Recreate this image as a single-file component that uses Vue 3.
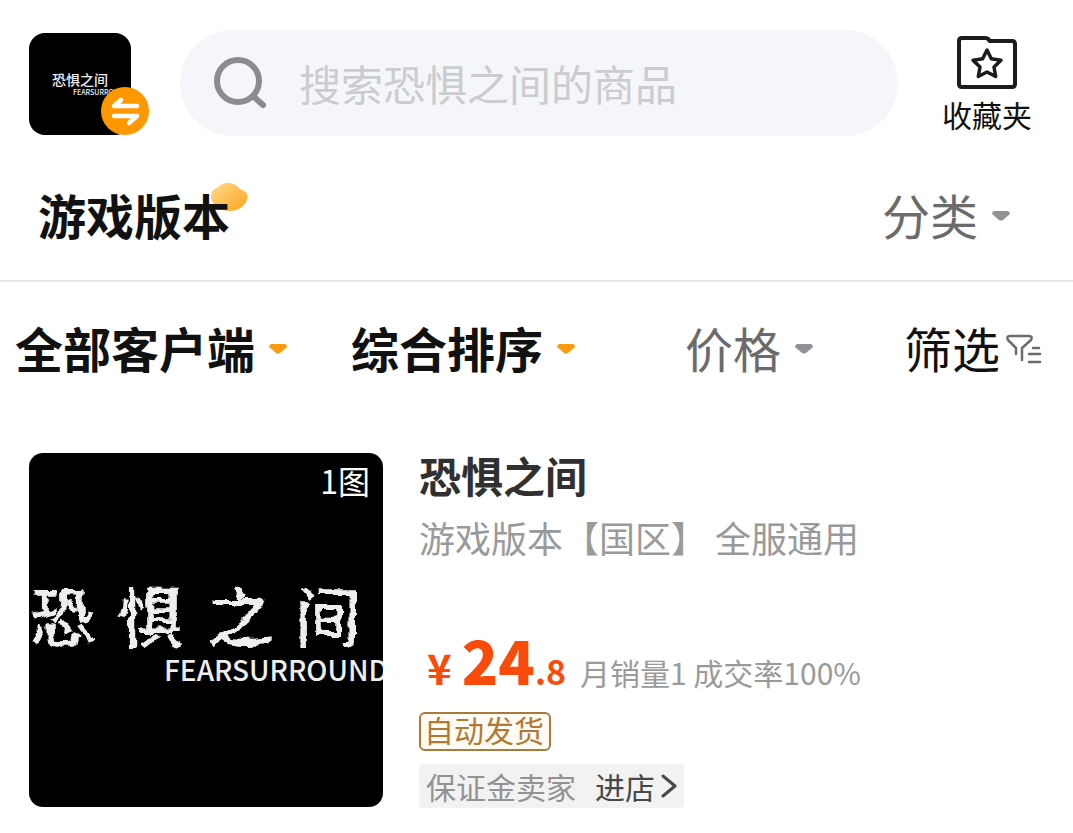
<script setup>
import { ref } from 'vue'

const keyword = ref('')
const filters = [
  { label: '全部客户端', tone: 'active', icon: 'arrow' },
  { label: '综合排序', tone: 'active', icon: 'arrow' },
  { label: '价格', tone: 'muted', icon: 'arrow' },
  { label: '筛选', tone: 'dark', icon: 'funnel' },
]
const brand = ['恐', '惧', '之', '间']
</script>

<template>
  <main class="page">
    <svg class="defs" width="0" height="0" aria-hidden="true">
      <filter id="brush" x="-5%" y="-10%" width="110%" height="120%">
        <feTurbulence type="fractalNoise" baseFrequency="0.07" numOctaves="3" seed="4" />
        <feDisplacementMap in="SourceGraphic" scale="9" xChannelSelector="R" yChannelSelector="G" />
      </filter>
    </svg>
    <header class="top">
      <button class="game" type="button" aria-label="切换游戏">
        <span class="game-cover">
          <span class="mini-cn">恐惧之间</span>
          <span class="mini-en">FEARSURROUND</span>
        </span>
        <span class="swap">
          <svg viewBox="0 0 48 48" fill="none" stroke="#fff" stroke-width="4.500" stroke-linecap="round" stroke-linejoin="round">
            <path d="M36 19H13L20 13M13 29H36L28 36" />
          </svg>
        </span>
      </button>
      <label class="search">
        <svg viewBox="0 0 54 54" fill="none" stroke="#8b8c90">
          <circle cx="25" cy="25" r="21" stroke-width="6" />
          <path d="M41 41L50 49" stroke-width="6" stroke-linecap="round" />
        </svg>
        <input v-model="keyword" type="text" placeholder="搜索恐惧之间的商品" aria-label="搜索商品" />
      </label>
      <a class="favorites" href="#">
        <svg viewBox="0 0 60 54" fill="none" stroke="#1c1c1c" stroke-width="4" stroke-linejoin="round">
          <path d="M5 2H28Q31 2 32 4L33 5H55Q58 5 58 8V48Q58 51 55 51H5Q2 51 2 48V5Q2 2 5 2Z" />
          <path d="M30 14L34.300 22.800L44 24.200L37 31L38.700 40.500L30 36L21.300 40.500L23 31L16 24.200L25.700 22.800Z" stroke-width="3.500" />
        </svg>
        <span>收藏夹</span>
      </a>
    </header>

    <nav class="section">
      <a class="section-title" href="#">
        <svg class="blob" viewBox="0 0 38 30">
          <defs>
            <linearGradient id="blobFill" x1="0" y1="0" x2="1" y2="1">
              <stop offset="0" stop-color="#ffdc8c" />
              <stop offset="1" stop-color="#fca21c" />
            </linearGradient>
          </defs>
          <path d="M1 17Q0 8 8 5Q17-3 27 4Q30 8 34 9Q40 13 36 20Q31 29 19 29Q5 28 1 17Z" fill="url(#blobFill)" />
        </svg>
        <span>游戏版本</span>
      </a>
      <button class="pick muted" type="button">
        分类
        <svg class="arrow" viewBox="0 0 18 10"><path d="M2 0H16Q18 1 18 3L11 9Q9 10 7 9L0 3Q0 1 2 0Z" fill="currentColor" /></svg>
      </button>
    </nav>

    <div class="filters">
      <button v-for="f in filters" :key="f.label" type="button" class="pick" :class="[f.tone, 'with-' + f.icon]">
        {{ f.label }}
        <svg v-if="f.icon === 'arrow'" class="arrow" viewBox="0 0 18 10"><path d="M2 0H16Q18 1 18 3L11 9Q9 10 7 9L0 3Q0 1 2 0Z" fill="currentColor" /></svg>
        <svg v-else class="funnel-icon" viewBox="0 0 36 30" fill="none" stroke="#6c6c6c" stroke-width="2.500" stroke-linecap="round" stroke-linejoin="round">
          <path d="M10 20V14L2 6Q0 2 4 2H23Q27 2 25 6L16 14V26M27 14H33M23 20H34M23 28H34" />
        </svg>
      </button>
    </div>

    <article class="card">
      <div class="cover">
        <div class="cover-cn"><span v-for="c in brand" :key="c">{{ c }}</span></div>
        <div class="cover-en">FEARSURROUND</div>
        <span class="count">1图</span>
      </div>
      <div class="info">
        <h2>恐惧之间</h2>
        <p class="desc">游戏版本【国区】 全服通用</p>
        <div class="price-row">
          <span class="yen">¥</span><strong>24</strong><span class="cents">.8</span>
          <span class="stats">月销量1 成交率100%</span>
        </div>
        <span class="tag">自动发货</span>
        <div class="shop">
          <span>保证金卖家</span>
          <a href="#">进店
            <svg viewBox="0 0 16 24" fill="none" stroke="#484848" stroke-width="3" stroke-linecap="round" stroke-linejoin="round"><path d="M2 2L14 12L2 22" /></svg>
          </a>
        </div>
      </div>
    </article>
  </main>
</template>

<style>
body {
  background: #fff;
}
</style>

<style scoped>
.page {
  font-family: "Noto Sans CJK SC", sans-serif;
  color: #111;
  overflow: hidden;
}
button {
  border: 0;
  padding: 0;
  background: none;
  font-family: inherit;
  color: #111;
}
a {
  color: inherit;
  text-decoration: none;
}
svg {
  display: block;
  flex: none;
}
.defs {
  position: absolute;
}
.top {
  display: flex;
  align-items: center;
  padding: 30px 41px 0 29px;
}
.game {
  position: relative;
  width: 102px;
  height: 102px;
  margin: 2px 49px 0 0;
  flex: none;
}
.game-cover {
  display: flex;
  flex-direction: column;
  justify-content: center;
  height: 100%;
  border-radius: 16px;
  background: #000;
  color: #eee;
  overflow: hidden;
  white-space: nowrap;
}
.mini-cn {
  font-size: 14px;
  line-height: 16px;
  font-weight: 500;
}
.mini-en {
  padding-left: 44px;
  font-size: 7px;
  line-height: 10px;
  font-weight: 500;
  text-align: left;
}
.swap {
  position: absolute;
  right: -18px;
  bottom: 0;
  width: 48px;
  height: 48px;
  border-radius: 50%;
  background: #ff9800;
}
.search {
  display: flex;
  align-items: center;
  flex: 1;
  min-width: 0;
  height: 106px;
  padding: 0 33px;
  box-sizing: border-box;
  border-radius: 53px;
  background: #f5f6fa;
}
.search svg {
  width: 54px;
  height: 54px;
}
.search input {
  flex: 1;
  min-width: 0;
  height: 62px;
  margin-left: 32px;
  padding: 0;
  border: 0;
  outline: 0;
  background: none;
  font: 42px/62px "Noto Sans CJK SC", sans-serif;
  color: #222;
}
.search input::placeholder {
  color: #cbccd0;
  opacity: 1;
}
.favorites {
  display: flex;
  flex-direction: column;
  align-items: center;
  gap: 4px;
  margin-left: 44px;
  padding-top: 4px;
  font-size: 30px;
  line-height: 40px;
}
.favorites svg {
  width: 60px;
  height: 54px;
}
.section {
  display: flex;
  align-items: center;
  justify-content: space-between;
  height: 146px;
  padding: 12px 63px 0 38px;
  box-sizing: border-box;
  border-bottom: 2px solid #e7e7e8;
}
.section-title {
  position: relative;
  font-size: 48px;
  line-height: 60px;
  font-weight: 700;
}
.section-title span {
  position: relative;
}
.blob {
  position: absolute;
  right: -18px;
  top: -2px;
  width: 38px;
  height: 30px;
}
.pick {
  display: flex;
  align-items: center;
  gap: 14px;
  font-size: 48px;
  line-height: 60px;
  white-space: nowrap;
}
.active {
  font-weight: 700;
}
.muted {
  color: #6b6b6b;
}
.with-funnel {
  gap: 6px;
}
.arrow {
  width: 18px;
  height: 10px;
  margin-top: 4px;
  color: #929297;
}
.active .arrow {
  color: #fc9a10;
}
.funnel-icon {
  width: 36px;
  height: 30px;
  margin-top: 4px;
}
.filters {
  display: grid;
  grid-template-columns: 336fr 334fr 219fr 138fr;
  align-items: center;
  height: 130px;
  padding: 0 31px 0 15px;
}
.card {
  display: flex;
  gap: 36px;
  padding: 41px 29px 26px;
}
.cover {
  position: relative;
  flex: none;
  width: 354px;
  height: 354px;
  padding-top: 122px;
  box-sizing: border-box;
  border-radius: 14px;
  overflow: hidden;
  background: #000;
  color: #eee;
}
.cover-cn {
  display: flex;
  justify-content: space-between;
  padding-right: 22px;
  font-size: 66px;
  line-height: 76px;
  font-weight: 500;
  filter: url(#brush);
}
.cover-en {
  padding-left: 135px;
  font-size: 28px;
  line-height: 36px;
  font-weight: 500;
  white-space: nowrap;
}
.count {
  position: absolute;
  right: 13px;
  top: 7px;
  font-size: 32px;
  line-height: 40px;
  color: #fff;
}
.info {
  display: flex;
  flex-direction: column;
  align-items: flex-start;
  min-width: 0;
}
h2 {
  margin: 0;
  font-size: 42px;
  line-height: 44px;
  color: #303030;
}
.desc {
  margin: 18px 0 0;
  font-size: 36px;
  line-height: 44px;
  color: #9a9a9a;
  white-space: nowrap;
}
.price-row {
  display: flex;
  align-items: baseline;
  height: 60px;
  margin: 70px 0 23px;
  padding-left: 8px;
  line-height: 60px;
  color: #fa4b0a;
  font-weight: 700;
  white-space: nowrap;
}
.yen {
  margin-right: 10px;
  font-size: 42px;
}
.price-row strong {
  font-size: 60px;
}
.cents {
  font-size: 34px;
}
.stats {
  margin-left: 14px;
  font-size: 30px;
  font-weight: 400;
  color: #9a9a9a;
}
.tag {
  padding: 0 5px 4px 3px;
  border: 2px solid #a87a3c;
  border-radius: 6px;
  background: #fffaf2;
  font-size: 30px;
  line-height: 31px;
  color: #b07a34;
}
.shop {
  display: flex;
  align-items: center;
  gap: 19px;
  height: 44px;
  margin-top: 13px;
  padding: 0 7px;
  border-radius: 4px;
  background: #f2f2f2;
  font-size: 30px;
  line-height: 42px;
  color: #929292;
}
.shop a {
  display: flex;
  align-items: center;
  gap: 6px;
  color: #484848;
}
.shop svg {
  width: 16px;
  height: 24px;
}
</style>
